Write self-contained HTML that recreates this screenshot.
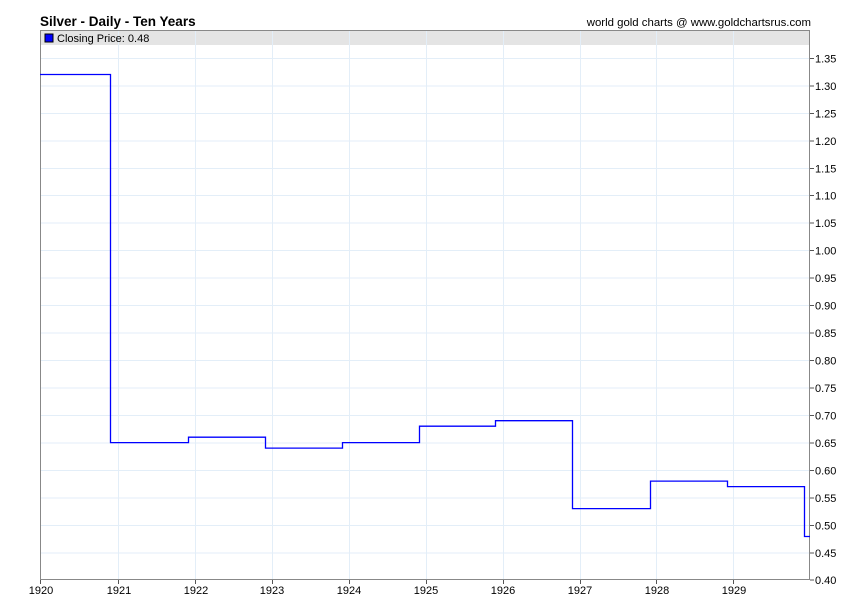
<!DOCTYPE html>
<html><head><style>body{margin:0;background:#fff}svg{display:block}text{font-family:"Liberation Sans",Arial,sans-serif}</style></head><body>
<svg width="850" height="616" xmlns="http://www.w3.org/2000/svg">
<rect width="850" height="616" fill="#fff"/>
<text x="40" y="26" font-size="13.5" font-weight="bold" fill="#000">Silver - Daily - Ten Years</text>
<text x="811" y="26" font-size="11.4" text-anchor="end" fill="#000">world gold charts @ www.goldchartsrus.com</text>
<rect x="40" y="30" width="770" height="15" fill="#e4e4e4"/>
<g stroke="#e3eef8" stroke-width="1">
<line x1="40" x2="810" y1="58.5" y2="58.5"/><line x1="40" x2="810" y1="86" y2="86"/><line x1="40" x2="810" y1="113.5" y2="113.5"/><line x1="40" x2="810" y1="141" y2="141"/><line x1="40" x2="810" y1="168.5" y2="168.5"/><line x1="40" x2="810" y1="195.5" y2="195.5"/><line x1="40" x2="810" y1="223" y2="223"/><line x1="40" x2="810" y1="250.5" y2="250.5"/><line x1="40" x2="810" y1="278" y2="278"/><line x1="40" x2="810" y1="305.5" y2="305.5"/><line x1="40" x2="810" y1="333" y2="333"/><line x1="40" x2="810" y1="360.5" y2="360.5"/><line x1="40" x2="810" y1="388" y2="388"/><line x1="40" x2="810" y1="415.5" y2="415.5"/><line x1="40" x2="810" y1="443" y2="443"/><line x1="40" x2="810" y1="470.5" y2="470.5"/><line x1="40" x2="810" y1="498" y2="498"/><line x1="40" x2="810" y1="525.5" y2="525.5"/><line x1="40" x2="810" y1="553" y2="553"/>
<line y1="30" y2="580" x1="118.5" x2="118.5"/><line y1="30" y2="580" x1="195.5" x2="195.5"/><line y1="30" y2="580" x1="272.5" x2="272.5"/><line y1="30" y2="580" x1="349.5" x2="349.5"/><line y1="30" y2="580" x1="426.5" x2="426.5"/><line y1="30" y2="580" x1="503.5" x2="503.5"/><line y1="30" y2="580" x1="580.5" x2="580.5"/><line y1="30" y2="580" x1="656.5" x2="656.5"/><line y1="30" y2="580" x1="733.5" x2="733.5"/>
</g>
<rect x="40.5" y="30.5" width="769" height="549" fill="none" stroke="#888"/>
<rect x="45" y="34" width="8" height="8" fill="#0000ff" stroke="#000" stroke-width="1"/>
<text x="57" y="42" font-size="11" fill="#000">Closing Price: 0.48</text>
<polyline fill="none" stroke="#0000ff" stroke-width="1.3" points="40,74.5 110.5,74.5 110.5,442.6 188.5,442.6 188.5,437.2 265.5,437.2 265.5,448.1 342.5,448.1 342.5,442.6 419.5,442.6 419.5,426.2 495.5,426.2 495.5,420.7 572.5,420.7 572.5,508.6 650.5,508.6 650.5,481.1 727.5,481.1 727.5,486.6 804.5,486.6 804.5,536.5 810,536.5"/>
<g stroke="#555"><line x1="810" x2="814" y1="58.5" y2="58.5"/><line x1="810" x2="814" y1="86" y2="86"/><line x1="810" x2="814" y1="113.5" y2="113.5"/><line x1="810" x2="814" y1="141" y2="141"/><line x1="810" x2="814" y1="168.5" y2="168.5"/><line x1="810" x2="814" y1="195.5" y2="195.5"/><line x1="810" x2="814" y1="223" y2="223"/><line x1="810" x2="814" y1="250.5" y2="250.5"/><line x1="810" x2="814" y1="278" y2="278"/><line x1="810" x2="814" y1="305.5" y2="305.5"/><line x1="810" x2="814" y1="333" y2="333"/><line x1="810" x2="814" y1="360.5" y2="360.5"/><line x1="810" x2="814" y1="388" y2="388"/><line x1="810" x2="814" y1="415.5" y2="415.5"/><line x1="810" x2="814" y1="443" y2="443"/><line x1="810" x2="814" y1="470.5" y2="470.5"/><line x1="810" x2="814" y1="498" y2="498"/><line x1="810" x2="814" y1="525.5" y2="525.5"/><line x1="810" x2="814" y1="553" y2="553"/><line x1="810" x2="814" y1="580" y2="580"/>
<line y1="580" y2="584" x1="40.5" x2="40.5"/><line y1="580" y2="584" x1="118.5" x2="118.5"/><line y1="580" y2="584" x1="195.5" x2="195.5"/><line y1="580" y2="584" x1="272.5" x2="272.5"/><line y1="580" y2="584" x1="349.5" x2="349.5"/><line y1="580" y2="584" x1="426.5" x2="426.5"/><line y1="580" y2="584" x1="503.5" x2="503.5"/><line y1="580" y2="584" x1="580.5" x2="580.5"/><line y1="580" y2="584" x1="656.5" x2="656.5"/><line y1="580" y2="584" x1="733.5" x2="733.5"/></g>
<g font-size="11" fill="#000">
<text x="815" y="62.5">1.35</text><text x="815" y="90">1.30</text><text x="815" y="117.5">1.25</text><text x="815" y="145">1.20</text><text x="815" y="172.5">1.15</text><text x="815" y="199.5">1.10</text><text x="815" y="227">1.05</text><text x="815" y="254.5">1.00</text><text x="815" y="282">0.95</text><text x="815" y="309.5">0.90</text><text x="815" y="337">0.85</text><text x="815" y="364.5">0.80</text><text x="815" y="392">0.75</text><text x="815" y="419.5">0.70</text><text x="815" y="447">0.65</text><text x="815" y="474.5">0.60</text><text x="815" y="502">0.55</text><text x="815" y="529.5">0.50</text><text x="815" y="557">0.45</text><text x="815" y="584">0.40</text>
</g>
<g font-size="11" fill="#000" text-anchor="middle">
<text x="41" y="594">1920</text><text x="119" y="594">1921</text><text x="196" y="594">1922</text><text x="272" y="594">1923</text><text x="349" y="594">1924</text><text x="426" y="594">1925</text><text x="503" y="594">1926</text><text x="580" y="594">1927</text><text x="657" y="594">1928</text><text x="734" y="594">1929</text>
</g>
</svg>
</body></html>
